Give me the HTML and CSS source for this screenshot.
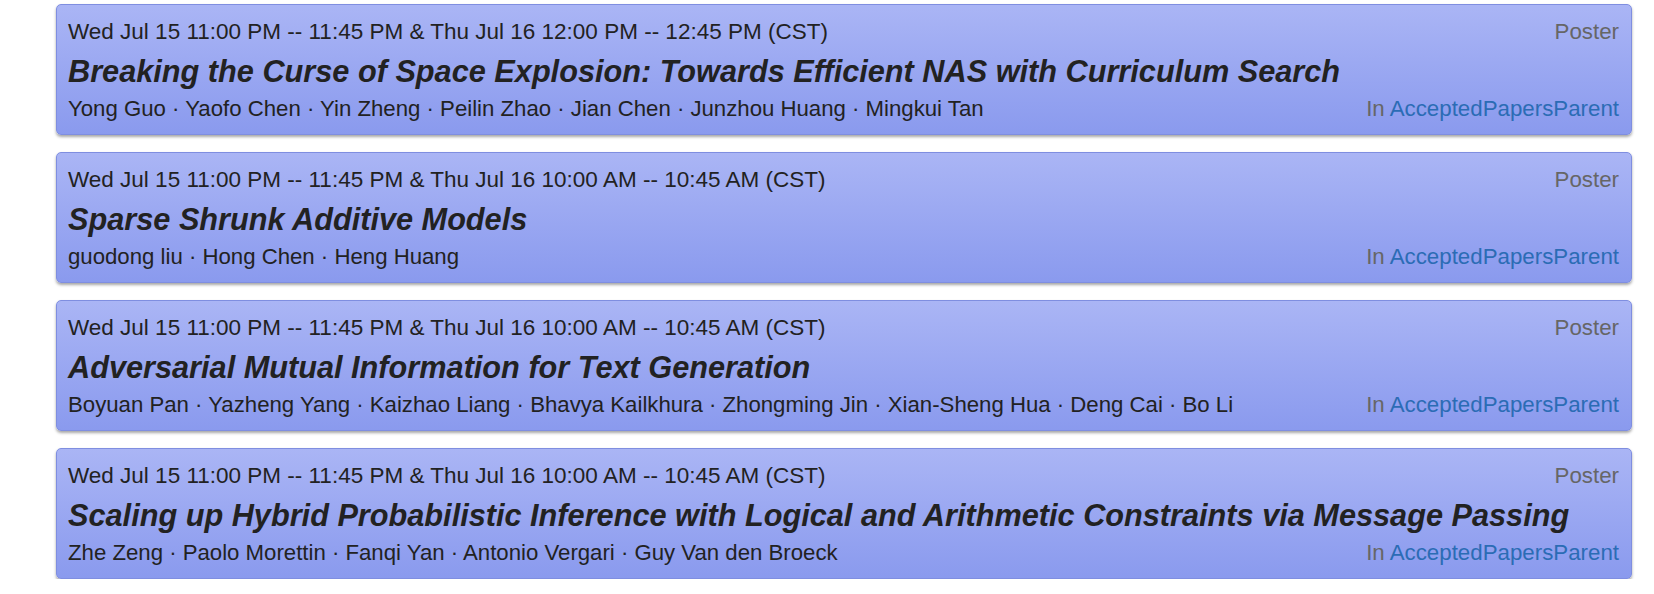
FILE: index.html
```html
<!DOCTYPE html>
<html>
<head>
<meta charset="utf-8">
<link rel="stylesheet" href="styles.css">
</head>
<body>
<div class="list">
  <div class="card">
    <div class="row">
      <div class="date">Wed Jul 15 11:00 PM -- 11:45 PM &amp; Thu Jul 16 12:00 PM -- 12:45 PM (CST)</div>
      <div class="type">Poster</div>
    </div>
    <div class="title">Breaking the Curse of Space Explosion: Towards Efficient NAS with Curriculum Search</div>
    <div class="row">
      <div class="authors">Yong Guo · Yaofo Chen · Yin Zheng · Peilin Zhao · Jian Chen · Junzhou Huang · Mingkui Tan</div>
      <div class="parent">In <a href="#">AcceptedPapersParent</a></div>
    </div>
  </div>
  <div class="card">
    <div class="row">
      <div class="date">Wed Jul 15 11:00 PM -- 11:45 PM &amp; Thu Jul 16 10:00 AM -- 10:45 AM (CST)</div>
      <div class="type">Poster</div>
    </div>
    <div class="title">Sparse Shrunk Additive Models</div>
    <div class="row">
      <div class="authors">guodong liu · Hong Chen · Heng Huang</div>
      <div class="parent">In <a href="#">AcceptedPapersParent</a></div>
    </div>
  </div>
  <div class="card">
    <div class="row">
      <div class="date">Wed Jul 15 11:00 PM -- 11:45 PM &amp; Thu Jul 16 10:00 AM -- 10:45 AM (CST)</div>
      <div class="type">Poster</div>
    </div>
    <div class="title">Adversarial Mutual Information for Text Generation</div>
    <div class="row">
      <div class="authors">Boyuan Pan · Yazheng Yang · Kaizhao Liang · Bhavya Kailkhura · Zhongming Jin · Xian-Sheng Hua · Deng Cai · Bo Li</div>
      <div class="parent">In <a href="#">AcceptedPapersParent</a></div>
    </div>
  </div>
  <div class="card">
    <div class="row">
      <div class="date">Wed Jul 15 11:00 PM -- 11:45 PM &amp; Thu Jul 16 10:00 AM -- 10:45 AM (CST)</div>
      <div class="type">Poster</div>
    </div>
    <div class="title">Scaling up Hybrid Probabilistic Inference with Logical and Arithmetic Constraints via Message Passing</div>
    <div class="row">
      <div class="authors">Zhe Zeng · Paolo Morettin · Fanqi Yan · Antonio Vergari · Guy Van den Broeck</div>
      <div class="parent">In <a href="#">AcceptedPapersParent</a></div>
    </div>
  </div>
</div>
</body>
</html>
```

FILE: styles.css
```css
html, body {
  margin: 0;
  padding: 0;
  background: #ffffff;
}
body {
  font-family: "Liberation Sans", Arial, sans-serif;
  color: #222222;
}
.list {
  display: flex;
  flex-direction: column;
  gap: 17px;
  padding: 4px 22px 0 56px;
}
.card {
  border: 1px solid #7f8ee0;
  border-radius: 5px;
  background: linear-gradient(to bottom, #aab5f5 0%, #8a9aee 100%);
  box-shadow: 0 2px 3px rgba(0, 0, 0, 0.35);
  padding: 14px 12px 12px 11px;
}
.row {
  display: flex;
  justify-content: space-between;
  align-items: center;
  font-size: 22.3px;
  line-height: 26px;
}
.date {
  font-size: 22.5px;
  color: #222222;
  white-space: nowrap;
}
.authors {
  font-size: 22.2px;
  color: #222222;
  white-space: nowrap;
}
.type {
  color: #666666;
}
.parent {
  color: #666666;
}
.parent a {
  color: #2b6cb5;
  text-decoration: none;
}
.title {
  font-size: 30.7px;
  font-weight: bold;
  font-style: italic;
  line-height: 40px;
  margin: 7px 0 4px 0;
  color: #222222;
  white-space: nowrap;
}
```
